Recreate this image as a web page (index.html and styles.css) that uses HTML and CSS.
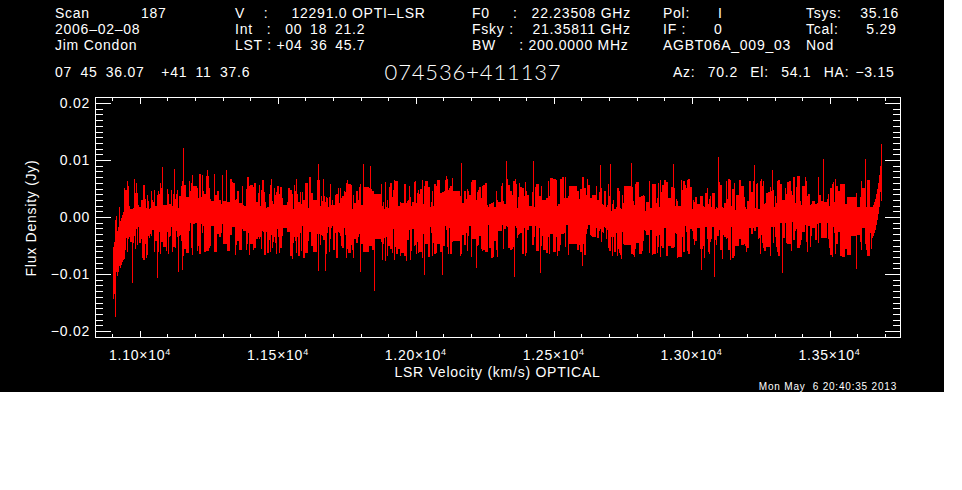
FILE: index.html
```html
<!DOCTYPE html>
<html lang="en">
<head>
  <meta charset="UTF-8">
  <title>074536+411137</title>
  <link rel="stylesheet" href="styles.css">
</head>
<body>
  <div class="screen">
    <div class="info">
      <div class="info-col">Scan           187
2006–02–08
Jim Condon</div>
      <div class="info-col">V    :     12291.0 OPTI–LSR
Int   :   00&ensp;18&ensp;21.2
LST : +04&ensp;36&ensp;45.7</div>
      <div class="info-col">F0     :   22.23508 GHz
Fsky :    21.35811 GHz
BW     : 200.0000 MHz</div>
      <div class="info-col">Pol:      I
IF :      0
AGBT06A_009_03</div>
      <div class="info-col">Tsys:    35.16
Tcal:      5.29
Nod</div>
    </div>
    <div class="source">
      <div class="coords">07 45 36.07  +41 11 37.6</div>
      <div class="source-name">074536+411137</div>
      <div class="pointing">Az:  70.2  El:  54.1  HA: −3.15</div>
    </div>
    <svg id="plot" class="plot" viewBox="0 90 944 302" width="944" height="302">
      <path id="spectrum" class="spectrum" d=""></path>
      <g id="ticks" class="ticks"></g>
      <rect class="frame" x="95" y="97.5" width="805.5" height="239.5"></rect>
      <g id="labels" class="labels"></g>
      <text class="axis-title" transform="translate(36 218) rotate(-90)">Flux Density (Jy)</text>
      <text class="axis-title" x="497.500" y="377">LSR Velocity (km/s) OPTICAL</text>
      <text class="stamp" x="897" y="390">Mon May  6 20:40:35 2013</text>
    </svg>
  </div>
  <script src="plot.js"></script>
</body>
</html>
```

FILE: styles.css
```css
body {
  margin: 0;
  padding: 0;
  background-color: white;
  font-family: "Liberation Sans", Arial, sans-serif;
}

.screen {
  width: 944px;
  height: 392px;
  background-color: black;
  color: white;
  overflow: hidden;
}

.info {
  display: grid;
  grid-template-columns: 180px 237px 191px 143px 1fr;
  padding: 5px 0 0 55px;
  height: 48px;
  font-size: 14px;
  line-height: 16px;
  letter-spacing: 0.75px;
}

.info-col {
  white-space: pre;
}

.source {
  display: grid;
  grid-template-columns: 300px 236px 1fr;
  align-items: center;
  padding-left: 55px;
  height: 37px;
  white-space: pre;
  font-size: 14px;
  letter-spacing: 0.75px;
}

.coords {
  word-spacing: 3.7px;
}

.source-name {
  font-family: Lato, "Liberation Sans", sans-serif;
  font-weight: 300;
  font-size: 22px;
  letter-spacing: 0.85px;
  text-align: center;
}

.pointing {
  padding-left: 82px;
  word-spacing: 1.5px;
}

.plot {
  display: block;
}

.frame {
  fill: none;
  stroke: white;
  stroke-width: 1;
  shape-rendering: crispEdges;
}

.ticks line {
  stroke: white;
  stroke-width: 1;
  shape-rendering: crispEdges;
}

.spectrum {
  fill: none;
  stroke: #ff0000;
  stroke-width: 1;
  shape-rendering: crispEdges;
}

.labels text,
.axis-title,
.stamp {
  fill: white;
  font-family: "Liberation Sans", Arial, sans-serif;
  letter-spacing: 0.75px;
  white-space: pre;
}

.labels text {
  font-size: 14px;
}

.labels .y-label {
  text-anchor: end;
}

.labels .x-label {
  text-anchor: middle;
}

.labels .power {
  font-size: 9px;
}

.axis-title {
  font-size: 14px;
  text-anchor: middle;
}

.stamp {
  font-size: 10px;
  letter-spacing: 0.8px;
  text-anchor: end;
}
```

FILE: plot.js
```js
// axis layout, in page pixels
var left = 95, right = 900.5, top_ = 97.5, bottom = 337;
var svgNs = 'http://www.w3.org/2000/svg';

function addLine(parent, x1, y1, x2, y2) {
  var l = document.createElementNS(svgNs, 'line');
  l.setAttribute('x1', x1);
  l.setAttribute('y1', y1);
  l.setAttribute('x2', x2);
  l.setAttribute('y2', y2);
  parent.appendChild(l);
}

function drawTicks() {
  var g = document.getElementById('ticks');
  var i, x, y, len;
  // y axis: major every 0.01, ten minors between
  for (i = 0; i <= 40; i++) {
    y = Math.round(331 - i * 5.7) + 0.5;
    len = i % 10 === 0 ? 16 : 8;
    addLine(g, left, y, left + len, y);
    addLine(g, right - len, y, right, y);
  }
  // x axis: major every 0.05e4, five minors between
  for (i = 0; i <= 28; i++) {
    x = Math.round(112.1 + i * 27.6) + 0.5;
    len = (i - 1) % 5 === 0 ? 6 : 3;
    addLine(g, x, bottom - len, x, bottom);
    addLine(g, x, top_, x, top_ + len);
  }
}

function addText(parent, cls, x, y, str) {
  var t = document.createElementNS(svgNs, 'text');
  t.setAttribute('class', cls);
  t.setAttribute('x', x);
  t.setAttribute('y', y);
  t.textContent = str;
  parent.appendChild(t);
  return t;
}

function drawLabels() {
  var g = document.getElementById('labels');
  var yLabels = ['−0.02', '−0.01', '0.00', '0.01', '0.02'];
  var xLabels = ['1.10', '1.15', '1.20', '1.25', '1.30', '1.35'];
  yLabels.forEach(function (s, i) {
    addText(g, 'y-label', 90, 336 - i * 57, s);
  });
  xLabels.forEach(function (s, i) {
    var t = addText(g, 'x-label', 140 + i * 137.9, 360, s + '×10');
    var sup = document.createElementNS(svgNs, 'tspan');
    sup.setAttribute('class', 'power');
    sup.setAttribute('dy', '-5');
    sup.textContent = '4';
    t.appendChild(sup);
  });
}

// small seeded generator so the noise is the same on each load
var seed = 187;
function rnd() {
  seed = (seed + 0x6D2B79F5) | 0;
  var t = Math.imul(seed ^ (seed >>> 15), 1 | seed);
  t = (t + Math.imul(t ^ (t >>> 7), 61 | t)) ^ t;
  return ((t ^ (t >>> 14)) >>> 0) / 4294967296;
}

// the spikes that stick out of the noise: [x, y]
var spikes = [
  [115, 317], [132, 283], [157, 278], [178, 272], [182, 270], [318, 271], [325, 271],
  [360, 272], [374, 291], [424, 275], [442, 275], [476, 268], [514, 277], [540, 273],
  [582, 266], [701, 270], [714, 277], [782, 273], [856, 269],
  [183, 148], [162, 167], [174, 169], [207, 170], [226, 170], [318, 164], [363, 164],
  [370, 166], [461, 163], [506, 161], [533, 161], [600, 165], [610, 164], [631, 163],
  [673, 164], [718, 157], [754, 165], [772, 170], [823, 159], [865, 159]
];

function baseline(x) {
  var y = 217 + 2 * Math.sin(x / 47) + 1.5 * Math.sin(x / 19);
  if (x < 128) y += 46 * Math.pow((128 - x) / 15, 1.6);
  if (x > 870) y -= 50 * Math.pow((x - 870) / 11, 2);
  return y;
}

// one vertical stroke per pixel column, some two columns wide
function drawSpectrum() {
  var d = [];
  var hi = 0, lo = 0;
  for (var x = 113; x <= 881; x++) {
    if (rnd() > 0.35) {
      hi = 8 + rnd() * 32;
      lo = 8 + rnd() * 34;
    }
    var base = baseline(x);
    var y1 = base - hi;
    var y2 = base + lo;
    spikes.forEach(function (s) {
      if (s[0] === x) {
        if (s[1] < y1) y1 = s[1];
        if (s[1] > y2) y2 = s[1];
      }
    });
    d.push('M' + (x + 0.5) + ' ' + Math.round(y1) + 'V' + Math.round(y2));
  }
  document.getElementById('spectrum').setAttribute('d', d.join(''));
}

drawTicks();
drawLabels();
drawSpectrum();
```
